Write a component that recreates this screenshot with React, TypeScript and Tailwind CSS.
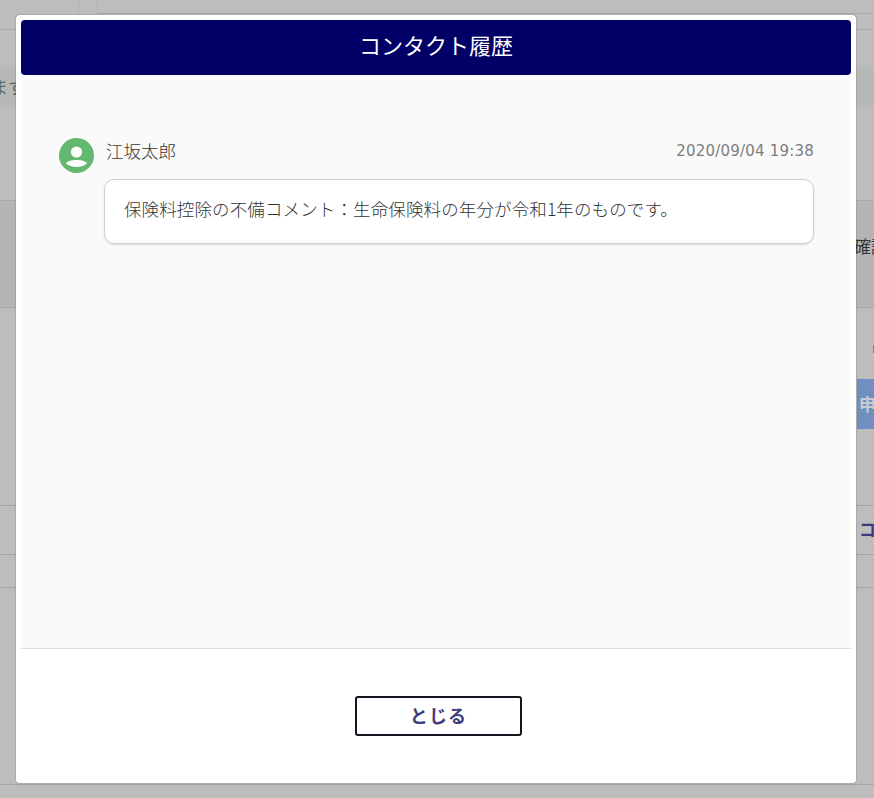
const font = "font-['Noto_Sans_CJK_JP','Noto_Sans',sans-serif]";

function Backdrop() {
  return (
    <div className="flex h-[798px] w-[874px] flex-col overflow-hidden bg-[#bdbdbd] text-[17px] text-[#333]">
      <div className="flex h-[14px] shrink-0 pl-[78px]">
        <div className="w-[20px] border-x border-[#b0b0b0]" />
        <div className="flex-1 border-b border-[#a9a9a9]" />
      </div>
      <div className="h-[16px] shrink-0 border-b border-[#aaa]" />
      <div className="h-[37px] shrink-0" />
      <div className="flex h-[40px] shrink-0 items-center overflow-hidden bg-[#b5b8b5]">
        <span className="ml-[-9px] whitespace-nowrap text-[#5c6660]">ます</span>
      </div>
      <div className="h-[94px] shrink-0 border-b border-[#a6a6a6]" />
      <div className="flex h-[107px] shrink-0 items-center border-b border-[#a6a6a6] bg-[#b5b5b5] pb-[16px] pl-[854px]">
        <span className="whitespace-nowrap leading-[20px]">確認</span>
      </div>
      <div className="flex h-[197px] shrink-0 flex-col pl-[857px] pt-[37px]">
        <div className="h-[8px] w-full pl-[16px]">
          <div className="h-full w-px bg-[#b5713a]" />
        </div>
        <div className="mt-[26px] flex h-[50px] items-center bg-[#6f8fbf] pl-[2px]">
          <span className="whitespace-nowrap font-bold text-[#c8ccd2]">申</span>
        </div>
      </div>
      <div className="flex h-[50px] shrink-0 items-center border-y border-[#a6a6a6] pb-[2px] pl-[859px]">
        <span className="whitespace-nowrap font-bold text-[#3a3a80]">コ</span>
      </div>
      <div className="h-[33px] shrink-0 border-b border-[#a6a6a6]" />
      <div className="h-[197px] shrink-0 border-b border-[#a6a6a6]" />
    </div>
  );
}

function Avatar() {
  return (
    <svg viewBox="0 0 35 35" className="h-[35px] w-[35px] shrink-0">
      <circle cx="17.5" cy="17.5" r="17.5" fill="#62b96f" />
      <circle cx="17.5" cy="14" r="5.6" fill="#fff" />
      <path d="M7 25.6 C9 22.6 13 22 17.5 22 C22 22 26 22.6 28 25.6 C25.5 28 21.5 29 17.5 29 C13.5 29 9.5 28 7 25.6 Z" fill="#fff" />
    </svg>
  );
}

export default function App() {
  return (
    <div className={`relative h-[798px] w-[874px] overflow-hidden ${font}`}>
      <Backdrop />
      <div className="absolute left-[16px] top-[15px] flex h-[768px] w-[840px] flex-col rounded-[4px] bg-white p-[5px] pb-0 shadow-[0_0_2px_rgba(0,0,0,0.35)]">
        <header className="flex h-[55px] shrink-0 items-center justify-center rounded-[4px] bg-[#000066] pb-[6px] text-[22px] text-white">
          コンタクト履歴
        </header>
        <main className="flex flex-1 flex-col bg-[#fafafa] pl-[38px] pr-[37px] pt-[63px]">
          <div className="flex h-[35px] items-start">
            <Avatar />
            <span className="ml-[12px] mt-[1px] text-[17.5px] font-light leading-[24px] text-[#333]">江坂太郎</span>
            <span className="ml-auto mt-[2px] font-['DejaVu_Sans',sans-serif] text-[15px] leading-[22px] tracking-[0.2px] text-[#7d7d7d]">2020/09/04 19:38</span>
          </div>
          <div className="ml-[45px] mt-[6px] flex h-[65px] items-center rounded-[10px] border border-[#d0d0d0] bg-white pb-[5px] pl-[19px] text-[17.5px] font-light tracking-[0.12px] text-[#333] shadow-[0_1px_2px_rgba(0,0,0,0.12)]">
            保険料控除の不備コメント：生命保険料の年分が令和1年のものです。
          </div>
        </main>
        <footer className="flex h-[135px] shrink-0 items-start justify-center border-t border-[#ddd] bg-white pl-[5px] pt-[47px]">
          <button className="flex h-[40px] w-[167px] items-center justify-center rounded-[3px] border-2 border-[#15151f] bg-white pb-[2px] text-[18px] font-bold tracking-[1.2px] text-[#3d3d80]">
            とじる
          </button>
        </footer>
      </div>
    </div>
  );
}
